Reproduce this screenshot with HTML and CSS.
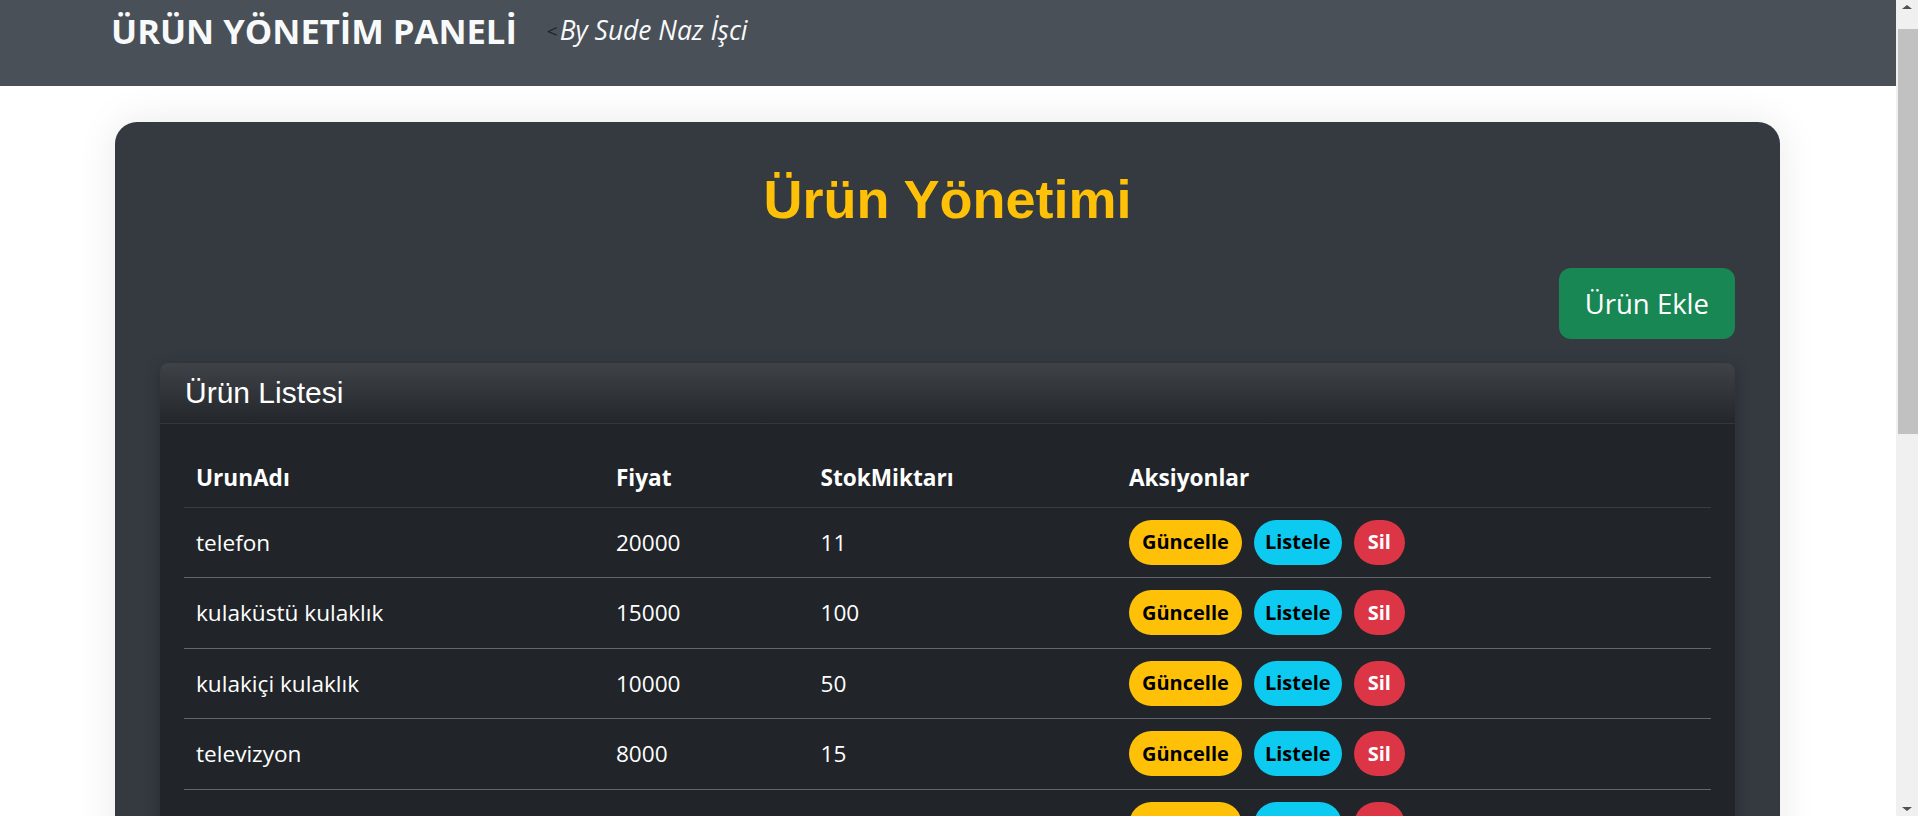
FILE: index.html
```html
<!DOCTYPE html>
<html lang="tr">
<head>
<meta charset="utf-8">
<title>Ürün Yönetim Paneli</title>
<link rel="stylesheet" href="styles.css">
</head>
<body>
<header class="topbar">
  <div class="brand-row">
    <span class="brand">ÜRÜN YÖNETİM PANELİ</span>
    <span class="tagline"><span class="lt">&lt;</span>By Sude Naz İşci</span>
  </div>
</header>

<main class="page">
  <section class="panel">
    <h1 class="panel-title">Ürün Yönetimi</h1>
    <div class="actions-bar">
      <button class="btn-add">Ürün Ekle</button>
    </div>

    <div class="list-card">
      <div class="list-card-header">Ürün Listesi</div>
      <div class="list-card-body">
        <table class="product-table">
          <thead>
            <tr>
              <th class="col-name">UrunAdı</th>
              <th class="col-price">Fiyat</th>
              <th class="col-stock">StokMiktarı</th>
              <th class="col-actions">Aksiyonlar</th>
            </tr>
          </thead>
          <tbody>
            <tr>
              <td>telefon</td><td>20000</td><td>11</td>
              <td><div class="row-actions"><button class="pill pill-warn">Güncelle</button><button class="pill pill-info">Listele</button><button class="pill pill-danger">Sil</button></div></td>
            </tr>
            <tr>
              <td>kulaküstü kulaklık</td><td>15000</td><td>100</td>
              <td><div class="row-actions"><button class="pill pill-warn">Güncelle</button><button class="pill pill-info">Listele</button><button class="pill pill-danger">Sil</button></div></td>
            </tr>
            <tr>
              <td>kulakiçi kulaklık</td><td>10000</td><td>50</td>
              <td><div class="row-actions"><button class="pill pill-warn">Güncelle</button><button class="pill pill-info">Listele</button><button class="pill pill-danger">Sil</button></div></td>
            </tr>
            <tr>
              <td>televizyon</td><td>8000</td><td>15</td>
              <td><div class="row-actions"><button class="pill pill-warn">Güncelle</button><button class="pill pill-info">Listele</button><button class="pill pill-danger">Sil</button></div></td>
            </tr>
            <tr>
              <td>tablet</td><td>9000</td><td>3</td>
              <td><div class="row-actions"><button class="pill pill-warn">Güncelle</button><button class="pill pill-info">Listele</button><button class="pill pill-danger">Sil</button></div></td>
            </tr>
          </tbody>
        </table>
      </div>
    </div>
  </section>
</main>

<div class="scrollbar" aria-hidden="true">
  <div class="sb-arrow sb-up"></div>
  <div class="sb-thumb"></div>
  <div class="sb-arrow sb-down"></div>
</div>
</body>
</html>
```

FILE: styles.css
```css
* { box-sizing: border-box; }

body {
  margin: 0 22px 0 0;
  background: #ffffff;
  font-family: "Open Sans", "Noto Sans", sans-serif;
  color: #212529;
}

.topbar {
  height: 86px;
  background: #495057;
  padding: 10px 111px 0;
}

.brand-row {
  display: flex;
  align-items: center;
  height: 41px;
}

.brand {
  font-size: 34.6px;
  font-weight: 700;
  line-height: 1.2;
  color: #f8f9fa;
}

.tagline {
  margin-left: 30px;
  font-size: 26.4px;
  font-style: italic;
  line-height: 1.2;
  color: #f8f9fa;
}

.tagline .lt {
  font-style: normal;
  font-size: 19px;
  color: #1e2226;
  margin-right: 2px;
  vertical-align: 2px;
}

.page {
  padding: 36px 116px 40px 115px;
}

.panel {
  background: #343a40;
  border-radius: 22px;
  padding: 46px 45px 45px;
  box-shadow: 0 0 40px rgba(0, 0, 0, 0.09);
}

.panel-title {
  margin: 0;
  text-align: center;
  font-family: "Liberation Sans", Arial, sans-serif;
  font-size: 54px;
  font-weight: 700;
  line-height: 1.18;
  color: #ffc107;
}

.actions-bar {
  display: flex;
  justify-content: flex-end;
  margin: 36px 0 24px;
}

.btn-add {
  font-family: "Open Sans", "Noto Sans", sans-serif;
  font-size: 27.5px;
  line-height: 39px;
  padding: 16px 26px;
  border: none;
  border-radius: 12px;
  background: #198754;
  color: #ffffff;
}

.list-card {
  background: #212529;
  border-radius: 8px;
  overflow: hidden;
  box-shadow: 0 4px 16px rgba(0, 0, 0, 0.25);
}

.list-card-header {
  height: 61px;
  display: flex;
  align-items: center;
  padding: 0 25px;
  background: linear-gradient(#3f4347, #23272b);
  border-bottom: 1px solid #34383d;
  font-family: "Liberation Sans", Arial, sans-serif;
  font-size: 30px;
  color: #ffffff;
}

.list-card-body {
  padding: 24px;
}

.product-table {
  width: 100%;
  border-collapse: collapse;
  font-size: 22.6px;
  color: #ffffff;
}

.product-table th {
  text-align: left;
  font-weight: 700;
  line-height: 33px;
  padding: 13px 12px;
  border-bottom: 1px solid #393d42;
}

.col-name { width: 27.5%; }
.col-price { width: 13.4%; }
.col-stock { width: 20.2%; }
.col-actions { width: 38.9%; }

.product-table td {
  padding: 12.25px 12px;
  line-height: 33px;
  vertical-align: middle;
  border-bottom: 1px solid #63676c;
}

.row-actions {
  display: flex;
  gap: 12px;
}

.pill {
  font-family: "Open Sans", "Noto Sans", sans-serif;
  font-size: 20px;
  font-weight: 700;
  line-height: 30px;
  padding: 7.5px 13px;
  border: none;
  border-radius: 999px;
}

.pill-warn { background: #ffc107; color: #000000; }
.pill-info { background: #0dcaf0; color: #000000; padding: 7.5px 11px; }
.pill-danger { background: #dc3545; color: #ffffff; padding: 7.5px 14px; }

/* imitation of the browser's classic scrollbar */
.scrollbar {
  position: fixed;
  top: 0;
  right: 0;
  width: 22px;
  height: 100vh;
  background: #f0f0f0;
}

.sb-thumb {
  position: absolute;
  top: 29px;
  left: 2px;
  right: 0;
  height: 405px;
  background: #c1c1c1;
}

.sb-arrow {
  position: absolute;
  left: 6px;
  width: 0;
  height: 0;
  border-left: 5px solid transparent;
  border-right: 5px solid transparent;
}

.sb-up {
  top: 5px;
  border-bottom: 4px solid #505050;
}

.sb-down {
  bottom: 5px;
  border-top: 4px solid #505050;
}
```
